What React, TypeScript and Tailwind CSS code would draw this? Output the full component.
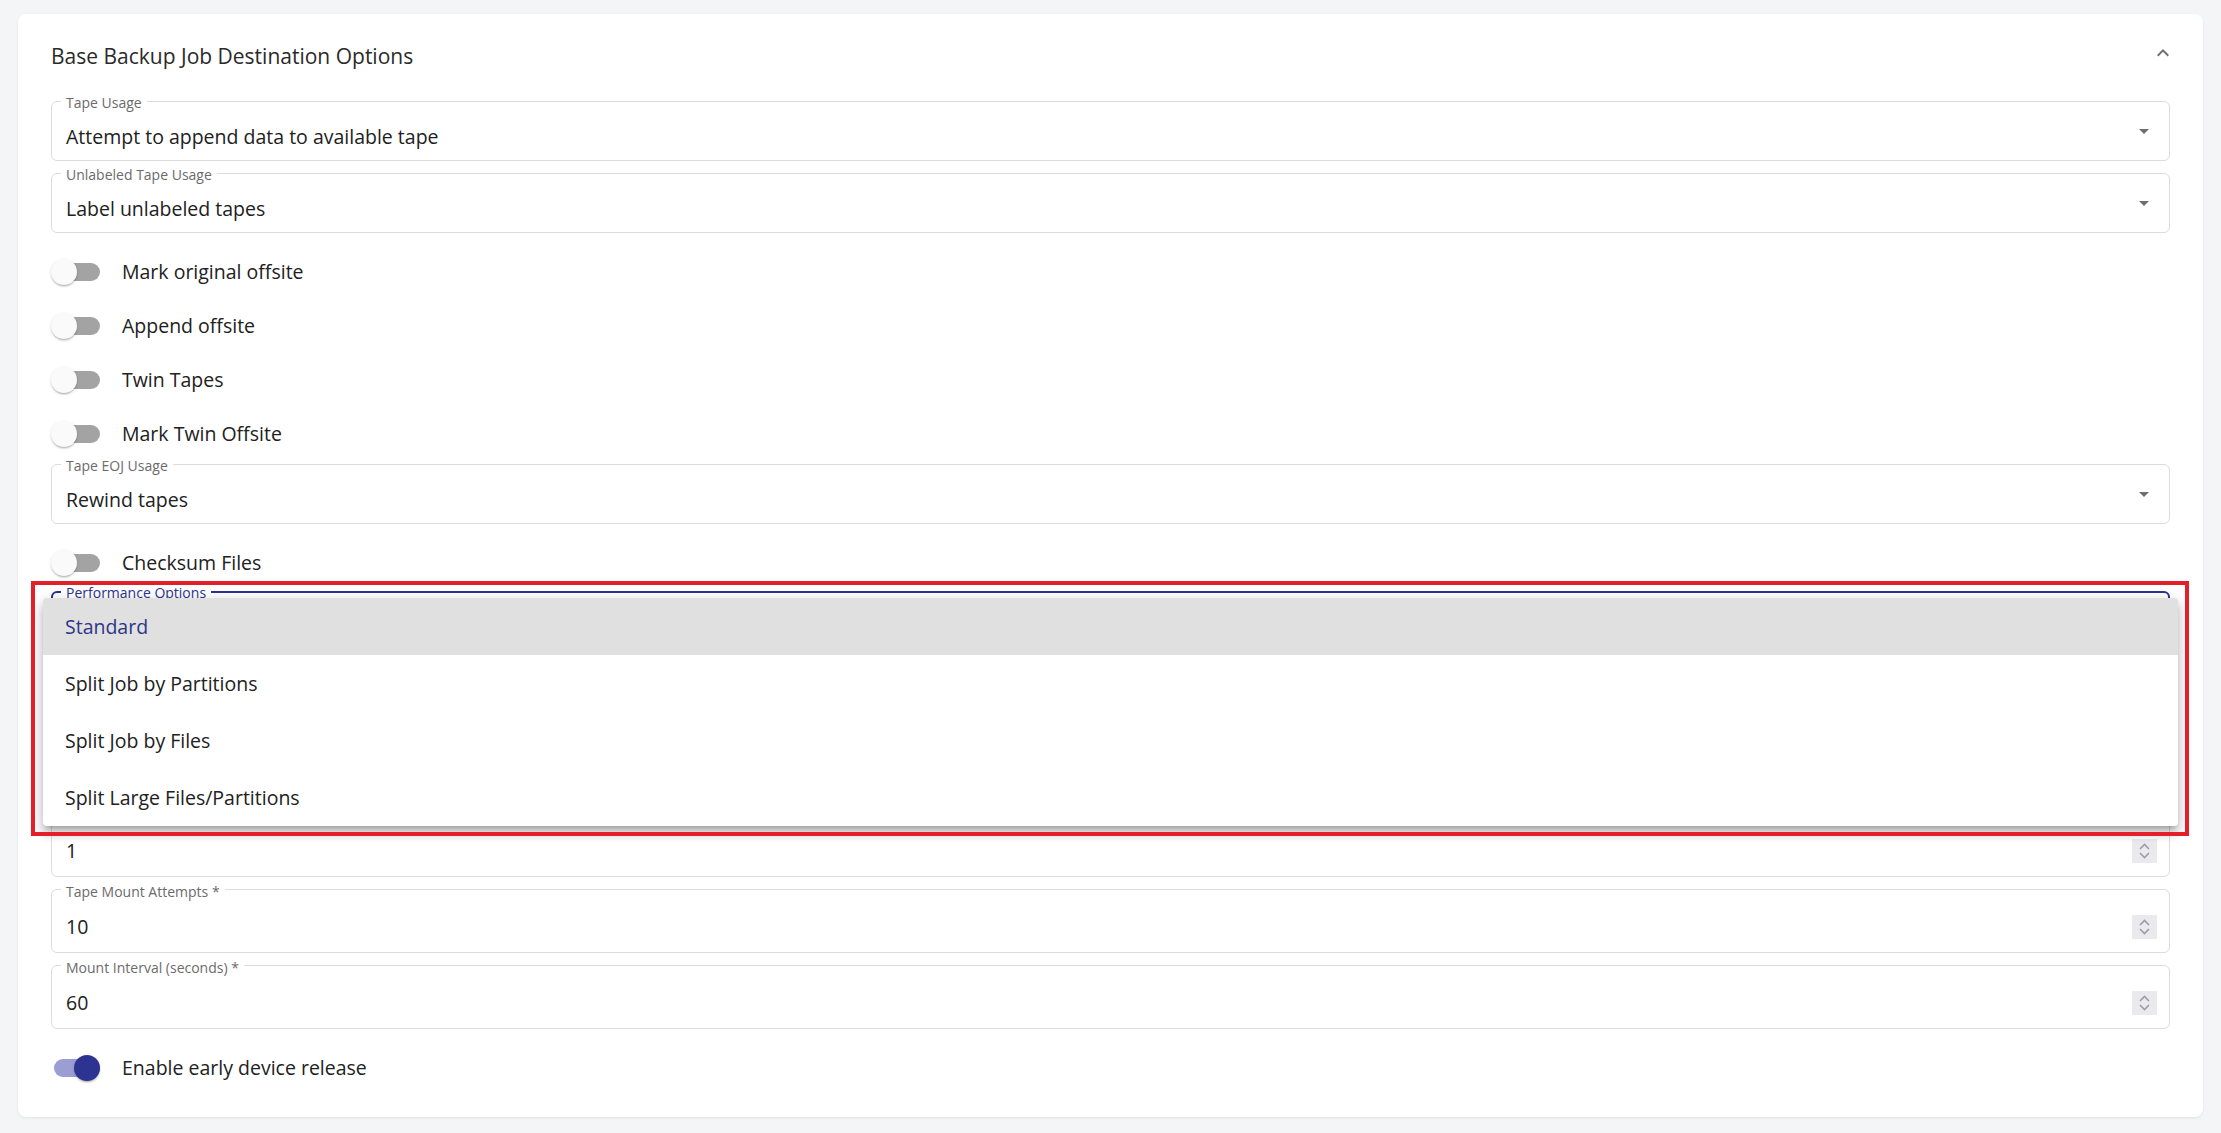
import React from "react";

const font = "font-['Open_Sans','Noto_Sans',sans-serif]";

function Switch({ on }: { on?: boolean }) {
  return (
    <span className="relative inline-block h-[26px] w-[49px] shrink-0">
      <span
        className={`absolute left-[3px] right-0 top-[4px] h-[18px] rounded-full ${
          on ? "bg-[#9b9ed3]" : "bg-[#a3a3a3]"
        }`}
      />
      <span
        className={`absolute top-0 h-[26px] w-[26px] rounded-full shadow-[0_2px_2px_-1px_rgba(0,0,0,0.25),0_1px_3px_0_rgba(0,0,0,0.15)] ${
          on ? "right-0 bg-[#2c3390]" : "left-0 bg-[#fafafa]"
        }`}
      />
    </span>
  );
}

function ToggleRow({ label, on }: { label: string; on?: boolean }) {
  return (
    <div className="flex h-[54px] items-center gap-[22px]">
      <Switch on={on} />
      <span className="text-[19.5px] text-[#212121]">{label}</span>
    </div>
  );
}

function ArrowDown() {
  return (
    <svg width="24" height="24" viewBox="0 0 24 24" className="shrink-0">
      <path d="M7 10l5 5 5-5z" fill="#6f6f6f" />
    </svg>
  );
}

function Spinner() {
  return (
    <span className="flex h-[24px] w-[25px] shrink-0 flex-col items-center justify-center gap-[2px] bg-[#e9e9ee]">
      <svg width="11" height="7" viewBox="0 0 11 7">
        <path d="M1 6l4.5-4.5L10 6" fill="none" stroke="#9d9ba9" strokeWidth="1.6" />
      </svg>
      <svg width="11" height="7" viewBox="0 0 11 7">
        <path d="M1 1l4.5 4.5L10 1" fill="none" stroke="#9d9ba9" strokeWidth="1.6" />
      </svg>
    </span>
  );
}

function SelectField({ label, value }: { label: string; value: string }) {
  return (
    <div className="relative flex h-[60px] items-center justify-between rounded-[6px] border border-[#dcdcdc] pl-[14px] pr-[13px]">
      <span className="absolute left-[9px] top-[-7px] bg-white px-[5px] text-[14px] leading-[16px] text-[#6b6b6b]">
        {label}
      </span>
      <span className="mt-[11px] text-[19.5px] text-[#212121]">{value}</span>
      <ArrowDown />
    </div>
  );
}

function NumberField({ label, value }: { label?: string; value?: string }) {
  return (
    <div className="relative flex h-[64px] items-center justify-between rounded-[6px] border border-[#dcdcdc] pl-[14px] pr-[12px]">
      {label && (
        <span className="absolute left-[9px] top-[-6px] bg-white px-[5px] text-[14px] leading-[16px] text-[#6b6b6b]">
          {label}
        </span>
      )}
      <span className="mt-[12px] text-[19.5px] text-[#212121]">{value}</span>
      <span className="mt-[12px]">
        <Spinner />
      </span>
    </div>
  );
}

const performanceOptions = [
  "Standard",
  "Split Job by Partitions",
  "Split Job by Files",
  "Split Large Files/Partitions",
];

export default function App() {
  return (
    <div className={`min-h-screen bg-[#f4f5f7] px-[18px] pb-[16px] pt-[14px] ${font}`}>
      <div className="rounded-[8px] bg-white px-[33px] pb-[22px] shadow-[0_1px_3px_rgba(0,0,0,0.08)]">
        {/* header */}
        <div className="flex h-[86px] items-center justify-between">
          <h2 className="text-[21px] font-normal text-[#2a2a2a]">Base Backup Job Destination Options</h2>
          <svg width="24" height="24" viewBox="0 0 24 24" className="mr-[-5px] mb-[8px]">
            <path d="M12 8l-6 6 1.41 1.41L12 10.83l4.59 4.58L18 14z" fill="#6f6f6f" />
          </svg>
        </div>

        <div className="mt-[1px]">
          <SelectField label="Tape Usage" value="Attempt to append data to available tape" />
        </div>
        <div className="mt-[12px]">
          <SelectField label="Unlabeled Tape Usage" value="Label unlabeled tapes" />
        </div>

        <div className="mt-[12px]">
          <ToggleRow label="Mark original offsite" />
          <ToggleRow label="Append offsite" />
          <ToggleRow label="Twin Tapes" />
          <ToggleRow label="Mark Twin Offsite" />
        </div>

        <div className="mt-[3px]">
          <SelectField label="Tape EOJ Usage" value="Rewind tapes" />
        </div>

        <div className="mt-[12px]">
          <ToggleRow label="Checksum Files" />
        </div>

        {/* performance options, open */}
        <div className="relative mt-[1px]">
          <div className="relative flex h-[60px] items-center justify-between rounded-[6px] border-2 border-[#2c3390] pl-[13px] pr-[12px]">
            <span className="absolute left-[8px] top-[-8px] bg-white px-[5px] text-[14px] leading-[16px] text-[#2c3390]">
              Performance Options
            </span>
            <span className="mt-[11px] text-[19.5px] text-[#212121]">Standard</span>
            <ArrowDown />
          </div>
          <div className="mt-[10px]">
            <NumberField />
          </div>
          <div className="mt-[12px]">
            <NumberField />
          </div>
          <div className="mt-[12px]">
            <NumberField value="1" />
          </div>

          <ul className="absolute left-[-8px] right-[-8px] top-[7px] z-10 overflow-hidden rounded-[4px] bg-white shadow-[0_5px_5px_-3px_rgba(0,0,0,0.2),0_8px_10px_1px_rgba(0,0,0,0.14),0_3px_14px_2px_rgba(0,0,0,0.12)]">
            {performanceOptions.map((o, i) => (
              <li
                key={o}
                className={`flex h-[57px] items-center px-[22px] text-[19.5px] ${
                  i === 0 ? "bg-[#e0e0e0] text-[#2d3688]" : "text-[#212121]"
                }`}
              >
                {o}
              </li>
            ))}
          </ul>

          <div className="pointer-events-none absolute left-[-20px] right-[-19px] top-[-10px] z-20 h-[255px] border-[4px] border-[#e3202a]" />
        </div>

        <div className="mt-[12px]">
          <NumberField label="Tape Mount Attempts *" value="10" />
        </div>
        <div className="mt-[12px]">
          <NumberField label="Mount Interval (seconds) *" value="60" />
        </div>

        <div className="mt-[12px]">
          <ToggleRow label="Enable early device release" on />
        </div>
      </div>
    </div>
  );
}
